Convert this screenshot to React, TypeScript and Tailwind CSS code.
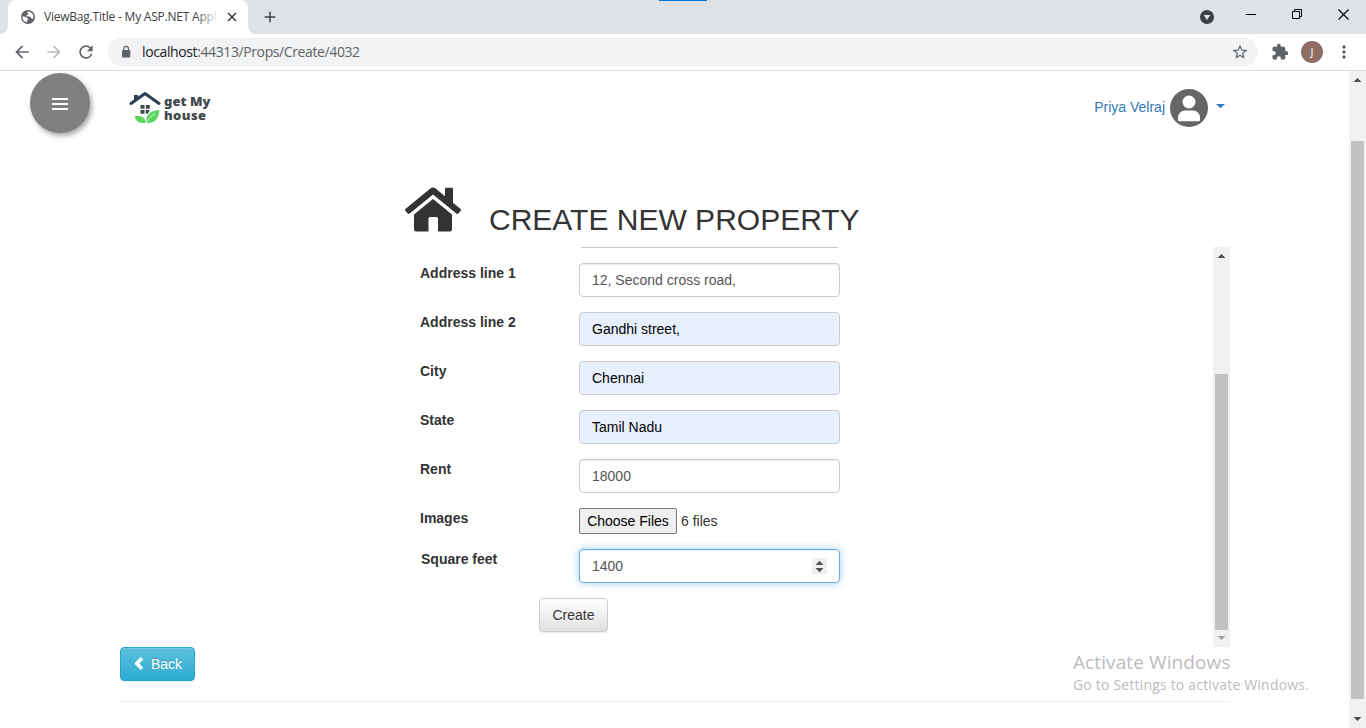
import React from "react";
import {
  MdAdd,
  MdArrowBack,
  MdArrowForward,
  MdExtension,
  MdMoreVert,
  MdRefresh,
  MdStarBorder,
} from "react-icons/md";

const CHROME_FONT = "font-['Open_Sans','Noto_Sans',sans-serif]";

function TabStrip() {
  return (
    <div className={`relative flex h-[34px] shrink-0 bg-[#dee1e6] ${CHROME_FONT}`}>
      <div className="absolute left-[659px] top-0 h-px w-12 bg-[#0078d7]" />
      <div className="flex w-2 items-end bg-white">
        <div className="h-full w-2 rounded-br-lg bg-[#dee1e6]" />
      </div>
      <div className="flex w-60 items-center rounded-t-lg bg-white pl-[13px]">
        <svg className="size-[14px] shrink-0" viewBox="0 0 14 14">
          <circle cx="7" cy="7" r="7" fill="#5f6368" />
          <path d="M7.500 1.500c-1.500 0-1.500 1.500-.5 2 .8.500.300 1.300-.7 1.300-1.300 0-.8 1.700.2 1.700h2.300c1.200 0 .8 2 2 2h1.400a5.600 5.600 0 0 0-3-6.500z" fill="white" />
          <path d="M1.400 6.600c1.200 0 3.800.2 4.300 1.100.4.800 1.600.6 1.500 1.600-.2 1-1.300.8-1.300 1.700v1.400A5.600 5.600 0 0 1 1.400 6.600z" fill="white" />
        </svg>
        <div className="relative ml-[9px] w-[175px] overflow-hidden whitespace-nowrap text-xs tracking-[-0.22px] text-[#3c4043]">
          ViewBag.Title - My ASP.NET Appl
          <div className="absolute inset-y-0 right-0 w-6 bg-linear-to-r from-white/0 to-white" />
        </div>
        <svg className="ml-2 size-[10px] shrink-0" viewBox="0 0 10 10" stroke="#3c4043" strokeWidth="1.600">
          <path d="M1 1l8 8M9 1L1 9" />
        </svg>
      </div>
      <div className="w-2 bg-white">
        <div className="h-full w-2 rounded-bl-lg bg-[#dee1e6]" />
      </div>
      <div className="flex items-center pl-[5px]">
        <MdAdd className="size-[18px] text-[#3c4043]" />
      </div>
      <div className="ml-auto flex items-start pr-[17px] text-black">
        <svg className="mt-[10px] size-[14px]" viewBox="0 0 14 14">
          <circle cx="7" cy="7" r="7" fill="#3c4043" />
          <path d="M3.700 5h6.600L7 10z" fill="#dee1e6" />
        </svg>
        <svg className="ml-8 mt-[9px] h-3 w-[10px]" viewBox="0 0 10 12">
          <path d="M0 5.500h10" stroke="currentColor" />
        </svg>
        <svg className="ml-9 mt-[9px] size-[10px]" viewBox="0 0 10 10" fill="none" stroke="currentColor">
          <path d="M.5 2.500h7v7h-7zM2.500 2.500v-2h7v7h-2" />
        </svg>
        <svg className="ml-9 mt-[9px] size-[11px]" viewBox="0 0 11 11">
          <path d="M.5 .5L10.500 10.500M10.500 .5L.5 10.500" stroke="currentColor" strokeWidth="1.100" />
        </svg>
      </div>
    </div>
  );
}

function Toolbar() {
  return (
    <div className={`flex h-[37px] shrink-0 items-center border-b border-[#d9dbdd] bg-white text-[#5f6368] ${CHROME_FONT}`}>
      <MdArrowBack className="ml-3 size-5" />
      <MdArrowForward className="ml-3 size-5 text-[#babcbe]" />
      <MdRefresh className="ml-3 size-5" />
      <div className="ml-3 flex h-7 w-[1150px] items-center rounded-full bg-[#f1f3f4] pl-[11px] pr-[9px]">
        <svg className="size-[14px]" viewBox="0 0 14 14">
          <rect x="3" y="5" width="8.300" height="7.500" rx="1" fill="currentColor" />
          <path d="M4.800 5.500V3.700a2.350 2.350 0 0 1 4.700 0v1.800" fill="none" stroke="currentColor" strokeWidth="1.200" />
        </svg>
        <div className="ml-[9px] text-sm tracking-[-0.39px]">
          <span className="text-[#202124]">localhost</span>:44313/Props/Create/4032
        </div>
        <MdStarBorder className="ml-auto size-[18px]" />
      </div>
      <MdExtension className="ml-[13px] size-[18px]" />
      <div className="ml-3 flex size-[22px] items-center justify-center rounded-full bg-[#8d6e63] text-[11px] text-white">
        J
      </div>
      <MdMoreVert className="ml-[11px] size-5" />
    </div>
  );
}

function Arrow({ down, className }: { down?: boolean; className: string }) {
  return (
    <svg className={className} width="17" height="17" viewBox="0 0 17 17" fill="currentColor" shapeRendering="crispEdges">
      {down ? <path d="M5 6h7v1h-1v1h-1v1h-1v1H8V9H7V8H6V7H5z" /> : <path d="M8 7h1v1h1v1h1v1h1v1H5v-1h1V9h1V8h1z" />}
    </svg>
  );
}

function Logo() {
  return (
    <div className="mt-[20px] flex h-8">
      <svg className="h-8 w-[32px]" viewBox="0 0 32 32">
        <path d="M2 12.500L16 2.500l14 10" fill="none" stroke="#2c3e55" strokeWidth="3" strokeLinecap="round" strokeLinejoin="round" />
        <path d="M5 4h4v4L5 10.500z" fill="#2c3e55" />
        <path d="M11.500 14h4v3.700h-4zM16.800 14h4v3.700h-4zM11.500 19h4v3.700h-4zM16.800 19h4l-2 3.700h-2z" fill="#3f484d" />
        <path d="M5.500 25.500c6-1.500 11 .5 11 6.500-6 .8-9.500-1.500-11-6.500z" fill="#5ad65c" />
        <path d="M17.500 32c-1.500-9 5-12.500 12.800-13C30 27 26.500 32.500 17.500 32z" fill="#5ad65c" />
        <path d="M17.500 32c2-4.500 4.500-7 8.500-9.500" stroke="white" strokeWidth=".7" fill="none" />
      </svg>
      <div className="ml-[3px] flex flex-col pt-[3px] font-['Noto_Sans','Open_Sans',sans-serif] text-[13px] font-black leading-[14px] text-[#3f484d]">
        <span className="tracking-[0.06px]">get My</span>
        <span className="tracking-[0.4px]">house</span>
      </div>
    </div>
  );
}

function Header() {
  return (
    <header className="flex h-[70px] shrink-0">
      <button className="ml-[30px] mt-[2px] flex size-[60px] items-center justify-center rounded-full bg-[#808080] shadow-[2px_3px_5px_rgba(0,0,0,0.35)]">
        <svg className="mt-[2px] size-4" viewBox="0 0 16 16" stroke="white" strokeWidth="2">
          <path d="M0 3h16M0 8h16M0 13h16" />
        </svg>
      </button>
      <div className="ml-[39px]">
        <Logo />
      </div>
      <div className="ml-auto mr-[124px] flex h-[74px] items-center text-[#337ab7]">
        <span className="mb-[2px]">Priya Velraj</span>
        <svg className="ml-[5px] size-[38px]" viewBox="0 0 38 38">
          <circle cx="19" cy="19" r="19" fill="#666" />
          <circle cx="19" cy="13" r="6.500" fill="white" />
          <path d="M8 31v-2.500a7 7 0 0 1 7-7h8a7 7 0 0 1 7 7V31a1.200 1.200 0 0 1-1.200 1.200H9.200A1.200 1.200 0 0 1 8 31z" fill="white" />
        </svg>
        <svg className="mb-1 ml-2 h-1 w-[9px]" viewBox="0 0 9 4" fill="currentColor">
          <path d="M0 0h9L4.500 4.300z" />
        </svg>
      </div>
    </header>
  );
}

const FIELDS = [
  { label: "Address line 1", value: "12, Second cross road,", filled: false },
  { label: "Address line 2", value: "Gandhi street,", filled: true },
  { label: "City", value: "Chennai", filled: true },
  { label: "State", value: "Tamil Nadu", filled: true },
  { label: "Rent", value: "18000", filled: false },
];

function PropertyForm() {
  return (
    <div className="ml-[390px] flex h-[400px] w-[840px] shrink-0">
      <div className="flex w-[823px] flex-col pl-[30px]">
        <div className="ml-[161px] h-px w-[257px] shrink-0 bg-[#ccc]" />
        <div className="mt-[15px] flex flex-col gap-[15px]">
          {FIELDS.map((f) => (
            <div key={f.label} className="flex h-[34px]">
              <label className="w-[159px] font-bold">{f.label}</label>
              <div
                className={
                  f.filled
                    ? "flex w-[261px] items-center rounded border border-[#ccc] bg-[#e8f0fe] px-3 text-black"
                    : "flex w-[261px] items-center rounded border border-[#ccc] bg-white px-3 text-[#555] shadow-[inset_0_1px_1px_rgba(0,0,0,0.075)]"
                }
              >
                {f.value}
              </div>
            </div>
          ))}
          <div className="flex h-[26px]">
            <label className="w-[159px] font-bold">Images</label>
            <button className="h-[26px] w-[98px] rounded-xs border border-[#767676] bg-[#efefef] text-black">Choose Files</button>
            <span className="ml-1 leading-[26px]">6 files</span>
          </div>
          <div className="flex h-[34px]">
            <label className="w-[159px] pl-px font-bold">Square feet</label>
            <div className="flex w-[261px] items-center justify-between rounded border border-[#66afe9] pl-3 pr-[12px] text-[#555] shadow-[inset_0_1px_1px_rgba(0,0,0,0.075),0_0_8px_rgba(102,175,233,0.6)]">
              1400
              <svg className="h-4 w-[15px] bg-[#efefef]" viewBox="0 0 15 16" fill="#505050">
                <path d="M3.500 7h8l-4-4.300zM3.500 10h8l-4 4.300z" />
              </svg>
            </div>
          </div>
          <button className="ml-[119px] h-[34px] w-[69px] rounded border border-[#ccc] bg-linear-to-b from-white to-[#e0e0e0] shadow-[0_1px_1px_rgba(0,0,0,0.075)] [text-shadow:0_1px_0_#fff]">
            Create
          </button>
        </div>
      </div>
      <div className="flex w-[17px] flex-col items-center bg-[#f1f1f1]">
        <Arrow className="text-[#505050]" />
        <div className="mt-[110px] h-[256px] w-[13px] bg-[#c1c1c1]" />
        <Arrow down className="text-[#a3a3a3]" />
      </div>
    </div>
  );
}

export default function App() {
  return (
    <div className="flex h-[728px] w-[1366px] flex-col overflow-hidden bg-white font-['Liberation_Sans',Arial,sans-serif] text-sm leading-5 text-[#333]">
      <TabStrip />
      <Toolbar />
      <div className="flex h-[657px]">
        <main className="relative flex w-[1349px] flex-col">
          <Header />
          <div className="flex h-[106px] shrink-0 pl-[405px]">
            <svg className="mt-[46px] h-[45px] w-[56px]" viewBox="0 0 56 45" fill="currentColor">
              <path d="M28 12L47 27.500V42.500q0 2-2 2H33V31.500q0-1.500-1.500-1.500H25q-1.500 0-1.500 1.500v13H11q-2 0-2-2V27.500z" />
              <path d="M25.300 1.500q2.700-2.200 5.400 0L40 9.200V2q0-1.200 1.200-1.200h5.600Q48 .8 48 2v13.800l7.300 6q1.200 1 .2 2.100l-2 2.400q-1 1.200-2.200.2L28 7.500 4.700 26.500q-1.200 1-2.200-.2l-2-2.400q-1-1.100.2-2.100z" />
            </svg>
            <h1 className="ml-[28px] mt-[61px] text-[30px] leading-[36px] whitespace-nowrap">CREATE NEW PROPERTY</h1>
          </div>
          <PropertyForm />
          <div className="ml-[120px] h-[55px] w-[1110px] shrink-0 border-b border-[#eee]">
            <button className="flex h-[34px] w-[75px] items-center rounded border border-[#28a4c9] bg-linear-to-b from-[#5bc0de] to-[#2aabd2] pl-[13px] text-white shadow-[inset_0_1px_0_rgba(255,255,255,0.15),0_1px_1px_rgba(0,0,0,0.075)] [text-shadow:0_-1px_0_rgba(0,0,0,0.2)]">
              <svg className="mb-px mr-[7px] h-[13px] w-[10px]" viewBox="0 0 10 13" fill="none" stroke="white" strokeWidth="3.600">
                <path d="M8 1.300L2.800 6.500l5.200 5.200" />
              </svg>
              Back
            </button>
          </div>
          <div className="absolute left-[1073px] top-[579px] whitespace-nowrap font-['Open_Sans','Noto_Sans',sans-serif] text-[#bcbcbc]">
            <div className="text-[19px] leading-[24px] tracking-[0.1px]">Activate Windows</div>
            <div className="mt-px text-sm leading-[20px] tracking-[0.19px]">Go to Settings to activate Windows.</div>
          </div>
        </main>
        <div className="flex w-[17px] flex-col items-center bg-[#f1f1f1]">
          <Arrow className="text-[#505050]" />
          <div className="mt-[53px] h-[558px] w-[13px] bg-[#c1c1c1]" />
          <Arrow down className="mt-[12px] text-[#505050]" />
        </div>
      </div>
    </div>
  );
}
